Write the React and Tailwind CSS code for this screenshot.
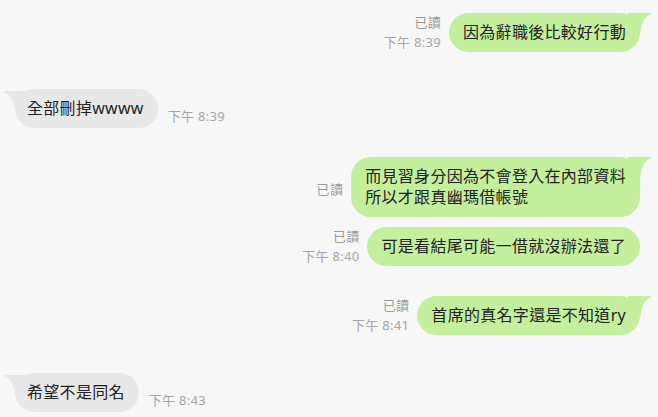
import React from 'react';

const messages = [
  { id: 1, side: 'me', text: ['因為辭職後比較好行動'], read: true, time: '下午 8:39', tail: true, mt: 'mt-[12px]' },
  { id: 2, side: 'them', text: ['全部刪掉wwww'], time: '下午 8:39', tail: true, mt: 'mt-[37px]' },
  { id: 3, side: 'me', text: ['而見習身分因為不會登入在內部資料', '所以才跟真幽瑪借帳號'], read: true, tail: true, mt: 'mt-[29px]' },
  { id: 4, side: 'me', text: ['可是看結尾可能一借就沒辦法還了'], read: true, time: '下午 8:40', mt: 'mt-[9px]' },
  { id: 5, side: 'me', text: ['首席的真名字還是不知道ry'], read: true, time: '下午 8:41', tail: true, mt: 'mt-[29px]' },
  { id: 6, side: 'them', text: ['希望不是同名'], time: '下午 8:43', tail: true, mt: 'mt-[38px]' },
];

function RightTail() {
  return (
    <svg className="absolute top-0 right-[-12px]" width="24" height="20" viewBox="0 0 24 20">
      <path d="M0 0 H22 Q24 0 23 1.5 Q14 4 12.5 20 L0 20 Z" fill="#c4ef9c" />
    </svg>
  );
}

function LeftTail() {
  return (
    <svg className="absolute top-0 left-[-12px]" width="24" height="20" viewBox="0 0 24 20">
      <path d="M24 2 H3 Q0 2 1.5 4 Q10 6 11.5 20 L24 20 Z" fill="#e8e8e8" />
    </svg>
  );
}

function Bubble({ m }) {
  const mine = m.side === 'me';
  return (
    <div
      className={`relative rounded-[20px] py-[9px] text-[16px] leading-[21px] tracking-[0.3px] text-[#222] ${
        mine ? 'bg-[#c4ef9c] px-[14px]' : 'bg-[#e8e8e8] pl-[12px] pr-[14px]'
      }`}
    >
      {m.tail && (mine ? <RightTail /> : <LeftTail />)}
      <div className="relative">
        {m.text.map((line, i) => (
          <div key={i}>{line}</div>
        ))}
      </div>
    </div>
  );
}

export default function App() {
  return (
    <div
      className="w-[658px] h-[417px] overflow-hidden bg-[#f7f7f7] flex flex-col"
      style={{ fontFamily: '"Noto Sans", "Noto Sans CJK TC", sans-serif' }}
    >
      {messages.map(m =>
        m.side === 'me' ? (
          <div key={m.id} className={`flex justify-end items-end gap-[8px] pr-[18px] ${m.mt}`}>
            <div className={`flex flex-col items-end text-[13px] leading-[20px] tracking-[0.3px] ${m.time ? '' : 'mb-[18px]'}`}>
              {m.read && <span className="text-[#9a9a9a]">已讀</span>}
              {m.time && <span className="text-[#a6a6a6]">{m.time}</span>}
            </div>
            <Bubble m={m} />
          </div>
        ) : (
          <div key={m.id} className={`flex items-end gap-[10px] pl-[15px] ${m.mt}`}>
            <Bubble m={m} />
            <span className="text-[13px] leading-[20px] tracking-[0.3px] text-[#a6a6a6] mb-[2px]">{m.time}</span>
          </div>
        )
      )}
    </div>
  );
}
